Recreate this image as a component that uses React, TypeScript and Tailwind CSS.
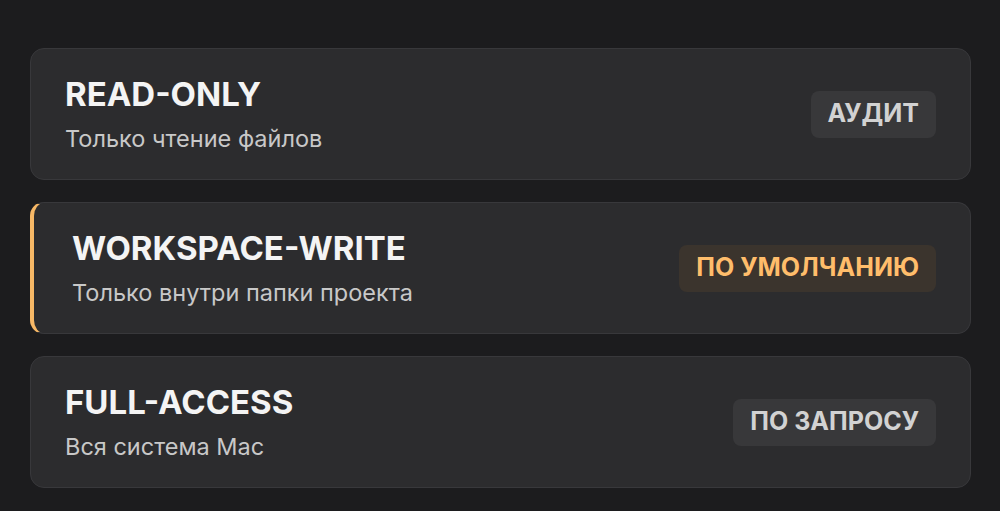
type Mode = {
  title: string;
  desc: string;
  badge: string;
  active?: boolean;
};

const modes: Mode[] = [
  { title: 'READ-ONLY', desc: 'Только чтение файлов', badge: 'АУДИТ' },
  { title: 'WORKSPACE-WRITE', desc: 'Только внутри папки проекта', badge: 'ПО УМОЛЧАНИЮ', active: true },
  { title: 'FULL-ACCESS', desc: 'Вся система Mac', badge: 'ПО ЗАПРОСУ' },
];

function ModeCard({ mode }: { mode: Mode }) {
  return (
    <div
      className={
        mode.active
          ? 'flex h-[132px] items-center justify-between rounded-[14px] border border-[#38383b] border-l-4 border-l-[#f7b866] bg-[#2c2c2e] pl-[38px] pr-[34px]'
          : 'flex h-[132px] items-center justify-between rounded-[14px] border border-[#38383b] bg-[#2c2c2e] pl-[34px] pr-[34px]'
      }
    >
      <div className="flex flex-col">
        <div className="text-[33px] font-bold leading-[38px] text-[#f4f4f4]">{mode.title}</div>
        <div className="mt-[12px] text-[23.5px] leading-[28px] text-[#c8c8c8]">{mode.desc}</div>
      </div>
      <div
        className={
          mode.active
            ? 'flex h-[47px] items-center rounded-lg bg-[#3b342d] px-[17px] text-[25px] font-bold text-[#ffbd6b]'
            : 'flex h-[47px] items-center rounded-lg bg-[#38383a] px-[17px] text-[25px] font-bold text-[#d2d2d2]'
        }
      >
        {mode.badge}
      </div>
    </div>
  );
}

export default function App() {
  return (
    <div
      className="flex min-h-[511px] w-full flex-col gap-[22px] bg-[#1c1c1e] pl-[30px] pr-[29px] pt-[48px]"
      style={{ fontFamily: 'Inter, "Noto Sans", sans-serif' }}
    >
      {modes.map((m) => (
        <ModeCard key={m.title} mode={m} />
      ))}
    </div>
  );
}
